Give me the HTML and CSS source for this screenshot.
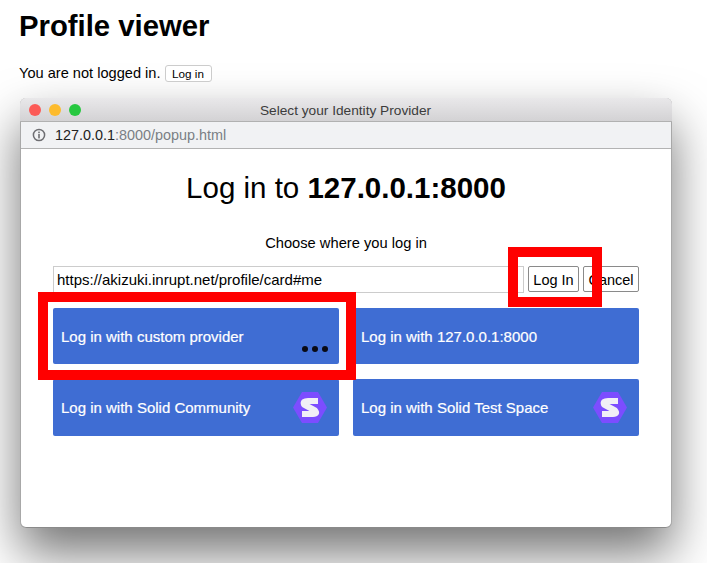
FILE: index.html
```html
<!DOCTYPE html>
<html lang="en">
<head>
<meta charset="utf-8">
<title>Profile viewer</title>
<link rel="stylesheet" href="styles.css">
</head>
<body>
<main class="page">
  <h1 class="page-title">Profile viewer</h1>
  <p class="status">You are not logged in. <button class="small-btn">Log in</button></p>
  <section class="window">
    <header class="titlebar">
      <span class="light light-red"></span>
      <span class="light light-yellow"></span>
      <span class="light light-green"></span>
      <span class="title-text">Select your Identity Provider</span>
    </header>
    <div class="addressbar">
      <svg class="info" width="14" height="14" viewBox="0 0 14 14"><circle cx="7" cy="7" r="5.6" fill="none" stroke="#6e6e72" stroke-width="1.5"/><rect x="6.2" y="6" width="1.6" height="4.4" fill="#6e6e72"/><rect x="6.2" y="3.6" width="1.6" height="1.6" fill="#6e6e72"/></svg>
      <span class="url"><span class="url-host">127.0.0.1</span>:8000/popup.html</span>
    </div>
    <div class="content">
      <h2 class="dialog-title">Log in to <strong>127.0.0.1:8000</strong></h2>
      <p class="choose">Choose where you log in</p>
      <form class="login-row">
        <input class="idp-input" type="text" value="https://akizuki.inrupt.net/profile/card#me">
        <button class="form-btn form-btn-login" type="button">Log In</button>
        <button class="form-btn form-btn-cancel" type="button">Cancel</button>
      </form>
      <div class="providers">
        <button class="provider" type="button">
          <span>Log in with custom provider</span>
          <svg class="dots" width="28" height="8" viewBox="0 0 28 8"><circle cx="4" cy="4" r="3"/><circle cx="14" cy="4" r="3"/><circle cx="24" cy="4" r="3"/></svg>
        </button>
        <button class="provider" type="button"><span>Log in with 127.0.0.1:8000</span></button>
        <button class="provider" type="button">
          <span>Log in with Solid Community</span>
          <svg class="solid" width="34" height="31" viewBox="0 0 34 31"><polygon points="0,15.5 9,0 25,0 34,15.5 25,31 9,31" fill="#7c4dff"/><path d="M25 9H15Q9.5 9 11 12.5L22 18.5Q25 22 20 22H9" fill="none" stroke="#f1f0f6" stroke-width="6" stroke-linejoin="round"/></svg>
        </button>
        <button class="provider" type="button">
          <span>Log in with Solid Test Space</span>
          <svg class="solid" width="34" height="31" viewBox="0 0 34 31"><polygon points="0,15.5 9,0 25,0 34,15.5 25,31 9,31" fill="#7c4dff"/><path d="M25 9H15Q9.5 9 11 12.5L22 18.5Q25 22 20 22H9" fill="none" stroke="#f1f0f6" stroke-width="6" stroke-linejoin="round"/></svg>
        </button>
      </div>
      <div class="highlight highlight-login"></div>
      <div class="highlight highlight-custom"></div>
    </div>
  </section>
</main>
</body>
</html>
```

FILE: styles.css
```css
html, body {
  margin: 0;
  height: 100%;
  overflow: hidden;
  background: #fff;
}
body {
  font-family: "Liberation Sans", Arial, sans-serif;
  color: #000;
}
.page {
  padding: 0 19px;
}
.page-title {
  margin: 0;
  padding-top: 9px;
  font-size: 29.3px;
  line-height: 33px;
  font-weight: 700;
}
.status {
  margin: 22px 0 0;
  font-size: 14.6px;
  line-height: 18px;
  height: 24px;
  white-space: nowrap;
}
.small-btn {
  font: 11.7px "Liberation Sans", Arial, sans-serif;
  height: 17px;
  width: 47px;
  margin-left: 0;
  padding: 0;
  background: #fff;
  color: #000;
  border: 1px solid #ccc;
  border-radius: 3px;
}
.window {
  box-sizing: border-box;
  margin: 10px 0 0 1px;
  width: 652px;
  height: 430px;
  background: #fff;
  border-radius: 6px;
  box-shadow: inset 1px 0 0 #a8a8a8, inset -1px 0 0 #a8a8a8, inset 0 -1px 0 #8a8a8a, 0 25px 50px rgba(0,0,0,.55);
  display: flex;
  flex-direction: column;
}
.titlebar {
  height: 24px;
  flex: none;
  box-sizing: border-box;
  display: flex;
  align-items: center;
  padding: 1px 0 0 9px;
  gap: 8px;
  background: linear-gradient(#e9e8ea, #d3d2d4);
  border-bottom: 1px solid #b1b1b1;
  border-radius: 6px 6px 0 0;
  position: relative;
}
.light {
  width: 12px;
  height: 12px;
  border-radius: 50%;
}
.light-red { background: #fc5b57; }
.light-yellow { background: #fdbb2d; }
.light-green { background: #27c840; }
.title-text {
  position: absolute;
  left: 0;
  right: 1px;
  text-align: center;
  font-size: 13.7px;
  color: #3c3c3c;
}
.addressbar {
  height: 27px;
  flex: none;
  box-sizing: border-box;
  display: flex;
  align-items: center;
  margin: 0 1px;
  padding-left: 11px;
  gap: 9px;
  background: #f1f2f4;
  border-bottom: 1px solid #b3b3b3;
  font-size: 14.4px;
  color: #7a7f85;
}
.url-host {
  color: #222;
}
.content {
  flex: 1;
  padding: 0 33px;
  position: relative;
}
.dialog-title {
  margin: 21px 0 0;
  text-align: center;
  font-size: 29.5px;
  line-height: 36px;
  font-weight: 400;
}
.choose {
  margin: 28px 0 0;
  text-align: center;
  font-size: 14.7px;
  line-height: 18px;
}
.login-row {
  display: flex;
  gap: 4px;
  margin-top: 14px;
  height: 27px;
}
.idp-input {
  box-sizing: border-box;
  flex: none;
  width: 471px;
  height: 27px;
  margin: 0;
  padding: 0 3px;
  border: 1px solid #ccc;
  font: 15px "Liberation Sans", Arial, sans-serif;
  color: #000;
  outline: none;
}
.form-btn {
  box-sizing: border-box;
  height: 26px;
  margin: 0;
  padding: 1px 0 0;
  background: #fff;
  border: 1px solid #8a8a8a;
  border-radius: 2px;
  font: 14.5px "Liberation Sans", Arial, sans-serif;
  color: #000;
}
.form-btn-login { width: 51px; }
.form-btn-cancel { width: 56px; }
.providers {
  display: grid;
  grid-template-columns: 286px 286px;
  grid-template-rows: 56px 57px;
  column-gap: 14px;
  row-gap: 15px;
  margin-top: 15px;
}
.provider {
  position: relative;
  display: flex;
  align-items: center;
  justify-content: space-between;
  margin: 0;
  padding: 0 12px 0 8px;
  background: #3f6dd3;
  border: 0;
  border-radius: 2px;
  color: #fff;
  font: 15px "Liberation Sans", Arial, sans-serif;
  -webkit-text-stroke: 0.2px #fff;
}
.dots {
  position: absolute;
  right: 10px;
  bottom: 11px;
  fill: #0a0a14;
}
.highlight {
  position: absolute;
  box-sizing: border-box;
  border: 10px solid #ff0000;
  pointer-events: none;
}
.highlight-login {
  left: 488px;
  top: 98px;
  width: 94px;
  height: 60px;
}
.highlight-custom {
  left: 18px;
  top: 143px;
  width: 318px;
  height: 88px;
}
```
